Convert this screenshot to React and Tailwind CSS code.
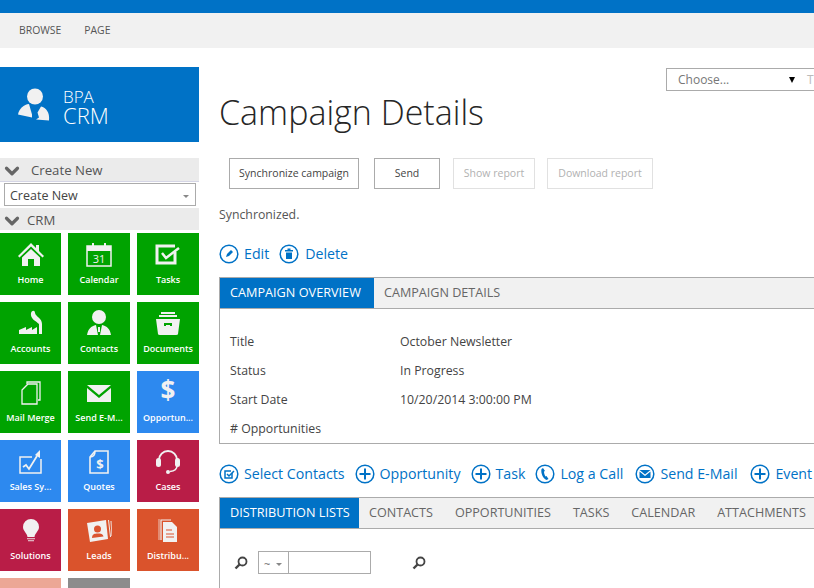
import { ChevronDown } from "lucide-react";

const font = { fontFamily: '"Open Sans", "Noto Sans", sans-serif' };

function HomeIcon() {
  return (
    <svg viewBox="0 0 26 24" className="h-6 w-[26px]" fill="#f1f1f1">
      <path d="M13 0 L18 5 V2 H21 V8 L26 13 L24.5 14.5 L13 3.5 L1.5 14.5 L0 13 Z" />
      <path d="M13 6 L22 14.5 V23 H16 V16 H10 V23 H4 V14.5 Z" />
    </svg>
  );
}

function CalendarIcon() {
  return (
    <svg viewBox="0 0 26 24" className="h-6 w-[26px]">
      <rect x="1" y="3" width="24" height="20" fill="none" stroke="#f1f1f1" strokeWidth="1.5" />
      <rect x="1" y="3" width="24" height="5" fill="#f1f1f1" />
      <rect x="6" y="0" width="2" height="6" fill="#f1f1f1" />
      <rect x="18" y="0" width="2" height="6" fill="#f1f1f1" />
      <text x="13" y="20" textAnchor="middle" fontSize="11" fill="#f1f1f1" fontFamily="Open Sans">31</text>
    </svg>
  );
}

function TasksIcon() {
  return (
    <svg viewBox="0 0 26 24" className="h-6 w-[26px]" fill="none" stroke="#f1f1f1">
      <path d="M20 9 V20 H2 V3 H20" strokeWidth="3" />
      <path d="M7 10 L11 15 L24 5" strokeWidth="2.5" />
    </svg>
  );
}

function AccountsIcon() {
  return (
    <svg viewBox="0 0 24 26" className="h-[26px] w-6" fill="#f1f1f1">
      <path d="M0 24 V20 L7 17 V20 L13 17 V20 L18 17 V24 Z" />
      <rect x="20" y="14" width="3" height="10" />
      <path d="M20 14 C17 11 11 9 12 3 C13 0 16 0 16 3 C17 7 23 8 23 14 Z" />
    </svg>
  );
}

function ContactsIcon() {
  return (
    <svg viewBox="0 0 24 26" className="h-[26px] w-6" fill="#f1f1f1">
      <circle cx="12" cy="7" r="7" />
      <path d="M0 25 C1 19 4 16 9 15 L11 25 Z M24 25 C23 19 20 16 15 15 L13 25 Z" />
      <rect x="11" y="17" width="2" height="5" />
    </svg>
  );
}

function DocumentsIcon() {
  return (
    <svg viewBox="0 0 24 24" className="h-6 w-6" fill="#f1f1f1">
      <rect x="5" y="0" width="14" height="2" />
      <rect x="3" y="3" width="18" height="2" />
      <path d="M0 7 H24 L22 22 Q22 23 20 23 H4 Q2 23 2 22 Z M8 11 V14 H10 V13 H14 V14 H16 V11 Z" fillRule="evenodd" />
    </svg>
  );
}

function MailMergeIcon() {
  return (
    <svg viewBox="0 0 20 24" className="h-6 w-5" fill="none" stroke="#f1f1f1" strokeWidth="1.3">
      <path d="M6 3 V1 H19 V19 H17" />
      <path d="M3 7 L7 3 H16 V23 H1 V9 Z" />
    </svg>
  );
}

function MailIcon() {
  return (
    <svg viewBox="0 0 24 17" className="mb-[3px] h-[17px] w-6" fill="#f1f1f1">
      <path d="M0 0 H24 L12 10 Z" />
      <path d="M0 3 L12 13 L24 3 V17 H0 Z" />
    </svg>
  );
}

function SalesIcon() {
  return (
    <svg viewBox="0 0 24 24" className="h-6 w-6" fill="none" stroke="#f1f1f1">
      <path d="M13 7 H1 V23 H22 V9" strokeWidth="1.5" />
      <path d="M4 17 L7 15 L10 19 L18 6" strokeWidth="1.8" />
      <path d="M16 5 L21 0 L21 8 Z" fill="#f1f1f1" stroke="none" />
    </svg>
  );
}

function QuotesIcon() {
  return (
    <svg viewBox="0 0 20 24" className="h-6 w-5" fill="none" stroke="#f1f1f1" strokeWidth="1.6">
      <path d="M6 1 H19 V23 H1 V7 Z" />
      <path d="M1 7 C4 7 6 5 6 1" />
      <text x="11" y="19" textAnchor="middle" fontSize="13" fontWeight="700" fill="#f1f1f1" stroke="none" fontFamily="Open Sans">$</text>
    </svg>
  );
}

function HeadsetIcon() {
  return (
    <svg viewBox="0 0 24 26" className="h-[26px] w-6" fill="#f1f1f1">
      <path d="M3 12 A9 9 0 0 1 21 12" fill="none" stroke="#f1f1f1" strokeWidth="2" />
      <rect x="0" y="10" width="5" height="9" rx="2.5" />
      <rect x="19" y="10" width="5" height="9" rx="2.5" />
      <path d="M21 18 C21 22 18 23 14 23.5" fill="none" stroke="#f1f1f1" strokeWidth="1.5" />
      <circle cx="12" cy="24" r="2" />
    </svg>
  );
}

function BulbIcon() {
  return (
    <svg viewBox="0 0 16 24" className="h-6 w-4" fill="#f1f1f1">
      <path d="M8 0 A8 8 0 0 1 16 8 C16 12 12 14 11.5 18 H4.5 C4 14 0 12 0 8 A8 8 0 0 1 8 0 Z" />
      <rect x="4" y="19" width="8" height="1.3" opacity="0.7" />
      <rect x="5" y="21" width="6" height="1.3" opacity="0.7" />
    </svg>
  );
}

function LeadsIcon() {
  return (
    <svg viewBox="0 0 25 24" className="h-6 w-[25px]" fill="#f1f1f1">
      <path d="M0 4 L19 1 L21 20 L3 23 Z" />
      <path d="M21 1 L22 1 L24 18 L23 18 Z M23.5 2 L24.5 2 L25 17 L24.5 17 Z" />
      <circle cx="10.5" cy="10" r="3.5" fill="#db5431" />
      <path d="M5 19 C5 15 8 14.5 10.5 14.5 C14 14.5 16 15 16.5 17.5 Z" fill="#db5431" />
    </svg>
  );
}

function DistributionIcon() {
  return (
    <svg viewBox="0 0 20 24" className="h-6 w-5" fill="none" stroke="#f1f1f1" strokeWidth="1.2">
      <path d="M3 21 V1 H13" />
      <path d="M1 21 V0" opacity="0.6" />
      <path d="M5 3 H14 L19 8 V23 H5 Z" fill="#f1f1f1" stroke="none" />
      <path d="M8 11 H14 M8 15 H16 M8 18 H16" stroke="#db5431" />
    </svg>
  );
}

function Dollar() {
  return <span className="text-[26px] leading-[30px] font-bold text-[#f1f1f1]">$</span>;
}

const GREEN = "bg-[#00a300]";
const BLUE = "bg-[#2d89ef]";
const RED = "bg-[#b91d47]";
const ORANGE = "bg-[#da532c]";

const tiles = [
  { label: "Home", color: GREEN, icon: <HomeIcon /> },
  { label: "Calendar", color: GREEN, icon: <CalendarIcon /> },
  { label: "Tasks", color: GREEN, icon: <TasksIcon /> },
  { label: "Accounts", color: GREEN, icon: <AccountsIcon /> },
  { label: "Contacts", color: GREEN, icon: <ContactsIcon /> },
  { label: "Documents", color: GREEN, icon: <DocumentsIcon /> },
  { label: "Mail Merge", color: GREEN, icon: <MailMergeIcon /> },
  { label: "Send E-M...", color: GREEN, icon: <MailIcon /> },
  { label: "Opportun...", color: BLUE, icon: <Dollar /> },
  { label: "Sales Sy...", color: BLUE, icon: <SalesIcon /> },
  { label: "Quotes", color: BLUE, icon: <QuotesIcon /> },
  { label: "Cases", color: RED, icon: <HeadsetIcon /> },
  { label: "Solutions", color: RED, icon: <BulbIcon /> },
  { label: "Leads", color: ORANGE, icon: <LeadsIcon /> },
  { label: "Distribu...", color: ORANGE, icon: <DistributionIcon /> },
];

function Tile({ tile }) {
  return (
    <div className={`${tile.color} flex h-[62px] flex-col items-center text-white`}>
      <div className="flex h-[34px] items-end justify-center">{tile.icon}</div>
      <div className="mt-[6px] text-[9px] leading-[14px] font-semibold whitespace-nowrap">{tile.label}</div>
    </div>
  );
}

function RingIcon({ children }) {
  return (
    <svg viewBox="0 0 20 20" className="h-5 w-5 shrink-0" fill="none" stroke="#0072c6">
      <circle cx="10" cy="10" r="8.8" strokeWidth="1.5" />
      {children}
    </svg>
  );
}

const PlusMark = <path d="M10 4.5 V15.5 M4.5 10 H15.5" strokeWidth="2" />;

const actions = [
  {
    label: "Select Contacts",
    mark: (
      <g strokeWidth="1.5">
        <path d="M13 9 V14 H6 V7 H12" />
        <path d="M8 10 L10 12 L15 7" />
      </g>
    ),
  },
  { label: "Opportunity", mark: PlusMark },
  { label: "Task", mark: PlusMark },
  {
    label: "Log a Call",
    labelClass: "w-[65px]",
    mark: (
      <path d="M8 4 L6.5 5 C5.5 9 8 14.5 11.5 16 L13.5 15 L11.5 12 L10.5 12.5 C9.5 11 9 9 9 7.5 L10 7 Z" fill="#0072c6" stroke="none" />
    ),
  },
  {
    label: "Send E-Mail",
    labelClass: "w-[80px]",
    mark: (
      <g fill="#0072c6" stroke="none">
        <path d="M4.5 6 H15.5 L10 10.5 Z" />
        <path d="M4.5 7.5 L10 12 L15.5 7.5 V14 H4.5 Z" />
      </g>
    ),
  },
  { label: "Event", mark: PlusMark },
];

function SearchIcon() {
  return (
    <svg viewBox="0 0 14 14" className="h-[14px] w-[14px]" fill="none" stroke="#444">
      <circle cx="8.5" cy="5.5" r="4" strokeWidth="1.8" />
      <path d="M5.5 8.5 L1.5 12.5" strokeWidth="2.4" />
    </svg>
  );
}

function Caret() {
  return <div className="h-0 w-0 border-x-[3px] border-t-[3px] border-x-transparent border-t-[#888]" />;
}

function Tabs({ active, activeWidth, items }) {
  return (
    <div className="flex h-[31px] items-stretch border-b border-[#ababab] bg-[#f1f1f1] text-[12.6px] text-[#666]">
      <div className={`flex items-center bg-[#0072c6] pl-[10px] text-[12.7px] text-white whitespace-nowrap ${activeWidth}`}>{active}</div>
      <div className="-ml-[1px] flex items-stretch">
        {items.map((item) => (
          <div key={item} className="flex items-center px-[11px] whitespace-nowrap">{item}</div>
        ))}
      </div>
    </div>
  );
}

function Field({ label, value }) {
  return (
    <div className="flex h-[29px] items-center text-[12.3px] text-[#444]">
      <div className="w-[170px]">{label}</div>
      <div>{value}</div>
    </div>
  );
}

export default function App() {
  return (
    <div style={font} className="flex h-[588px] w-[814px] flex-col overflow-hidden bg-white">
      <div className="h-[13px] shrink-0 bg-[#0072c6]" />
      <div className="flex h-[35px] shrink-0 items-center gap-[23px] bg-[#f1f1f1] pl-[19px] text-[10.4px] text-[#555]">
        <span>BROWSE</span>
        <span>PAGE</span>
      </div>

      <div className="flex min-h-0 flex-1">
        <aside className="w-[199px] shrink-0 pt-[19px]">
          <div className="flex h-[75px] items-center bg-[#0072c6] pl-[18px] text-white">
            <svg viewBox="0 0 32 32" className="h-[33px] w-[32px]" fill="#f1f1f1">
              <circle cx="17" cy="8" r="8" />
              <path d="M0 26 C1 20 6 16 11 15.5 L14 26 L14 29 Z" />
              <path d="M31 32 C32 24 28 19 23 18 L19.5 24 L21 29 L18 31 Z" />
            </svg>
            <div className="ml-[13px] pt-[5px] font-light">
              <div className="text-[17px] leading-[16px]">BPA</div>
              <div className="text-[22px] leading-[20px]">CRM</div>
            </div>
          </div>

          <div className="mt-[16px] flex h-[24px] items-center border-b border-[#d5d5e5] bg-[#ebebeb] pt-[3px] pl-[1px] text-[13.2px] text-[#555]">
            <ChevronDown size={22} strokeWidth={3.5} className="text-[#666]" />
            <span className="ml-[8px]">Create New</span>
          </div>
          <div className="mx-[4px] mt-[1px] flex h-[23px] w-[192px] items-center justify-between border border-[#ababab] pt-[3px] pr-[6px] pl-[5px] text-[12.5px] text-[#444]">
            <span>Create New</span>
            <Caret />
          </div>
          <div className="mt-[2px] flex h-[22px] items-center bg-[#ebebeb] pt-[4px] pl-[1px] text-[13.2px] text-[#555]">
            <ChevronDown size={22} strokeWidth={3.5} className="text-[#666]" />
            <span className="ml-[4px]">CRM</span>
          </div>

          <div className="mt-[3px] grid grid-cols-[61px_62px_62px] gap-[7px]">
            {tiles.map((tile) => (
              <Tile key={tile.label} tile={tile} />
            ))}
            <div className="h-[62px] bg-[#eca795]" />
            <div className="h-[62px] bg-[#8c8c8c]" />
          </div>
        </aside>

        <main className="min-w-0 flex-1 overflow-hidden pt-[20px] pl-[20px]">
          <div className="ml-[447px] flex h-[23px] w-[200px] items-center border border-[#ababab] pl-[11px] text-[12px] text-[#777]">
            <span className="w-[111px]">Choose...</span>
            <div className="h-0 w-0 border-x-[3.5px] border-t-[6px] border-x-transparent border-t-black" />
            <span className="ml-[12px] text-[#bbb]">T</span>
          </div>

          <h1 className="-mt-[1px] text-[34px] leading-[44px] font-light whitespace-nowrap text-[#262626]">Campaign Details</h1>

          <div className="mt-[24px] ml-[10px] flex text-[10.5px]">
            <div className="flex h-[31px] w-[130px] items-center justify-center border border-[#ababab] text-[#444] whitespace-nowrap">Synchronize campaign</div>
            <div className="ml-[15px] flex h-[31px] w-[66px] items-center justify-center border border-[#ababab] text-[#444]">Send</div>
            <div className="ml-[13px] flex h-[31px] w-[82px] items-center justify-center border border-[#e1e1e1] text-[#b1b1b1] whitespace-nowrap">Show report</div>
            <div className="ml-[12px] flex h-[31px] w-[106px] items-center justify-center border border-[#e1e1e1] text-[#b1b1b1] whitespace-nowrap">Download report</div>
          </div>

          <div className="mt-[11px] text-[12.3px] leading-[30px] text-[#555]">Synchronized.</div>

          <div className="mt-[14px] flex h-[20px] items-center text-[14.2px] text-[#0072c6]">
            <RingIcon>
              <path d="M7 13 L8 10 L12 6 L14 8 L10 12 Z" fill="#0072c6" stroke="none" />
            </RingIcon>
            <span className="mr-[10px] ml-[5px]">Edit</span>
            <RingIcon>
              <path d="M6 6 H14 V7.5 H6 Z M7 8.5 H13 V15 H7 Z M8.5 4.5 H11.5 V6 H8.5 Z" fill="#0072c6" stroke="none" />
            </RingIcon>
            <span className="ml-[6px]">Delete</span>
          </div>

          <div className="mt-[13px] h-[167px] w-[700px] border border-[#ababab]">
            <Tabs active="CAMPAIGN OVERVIEW" activeWidth="w-[154px]" items={["CAMPAIGN DETAILS"]} />
            <div className="pt-[19px] pl-[10px]">
              <Field label="Title" value="October Newsletter" />
              <Field label="Status" value="In Progress" />
              <Field label="Start Date" value="10/20/2014 3:00:00 PM" />
              <Field label="# Opportunities" value="" />
            </div>
          </div>

          <div className="mt-[20px] flex h-[20px] items-center gap-[10px] text-[14.2px] whitespace-nowrap text-[#0072c6]">
            {actions.map((action) => (
              <div key={action.label} className="flex items-center gap-[5px]">
                <RingIcon>{action.mark}</RingIcon>
                <span className={action.labelClass}>{action.label}</span>
              </div>
            ))}
          </div>

          <div className="mt-[13px] h-[120px] w-[700px] border-t border-l border-[#ababab]">
            <Tabs
              active="DISTRIBUTION LISTS"
              activeWidth="w-[139px]"
              items={["CONTACTS", "OPPORTUNITIES", "TASKS", "CALENDAR", "ATTACHMENTS"]}
            />
            <div className="mt-[22px] flex items-center pl-[14px]">
              <SearchIcon />
              <div className="ml-[10px] flex h-[23px] w-[113px] border border-[#ababab] text-[11px] text-[#666]">
                <div className="flex w-[30px] items-center justify-between border-r border-[#ababab] pt-[3px] pr-[6px] pl-[5px]">
                  <span>~</span>
                  <Caret />
                </div>
              </div>
              <div className="ml-[41px]">
                <SearchIcon />
              </div>
            </div>
          </div>
        </main>
      </div>
    </div>
  );
}
